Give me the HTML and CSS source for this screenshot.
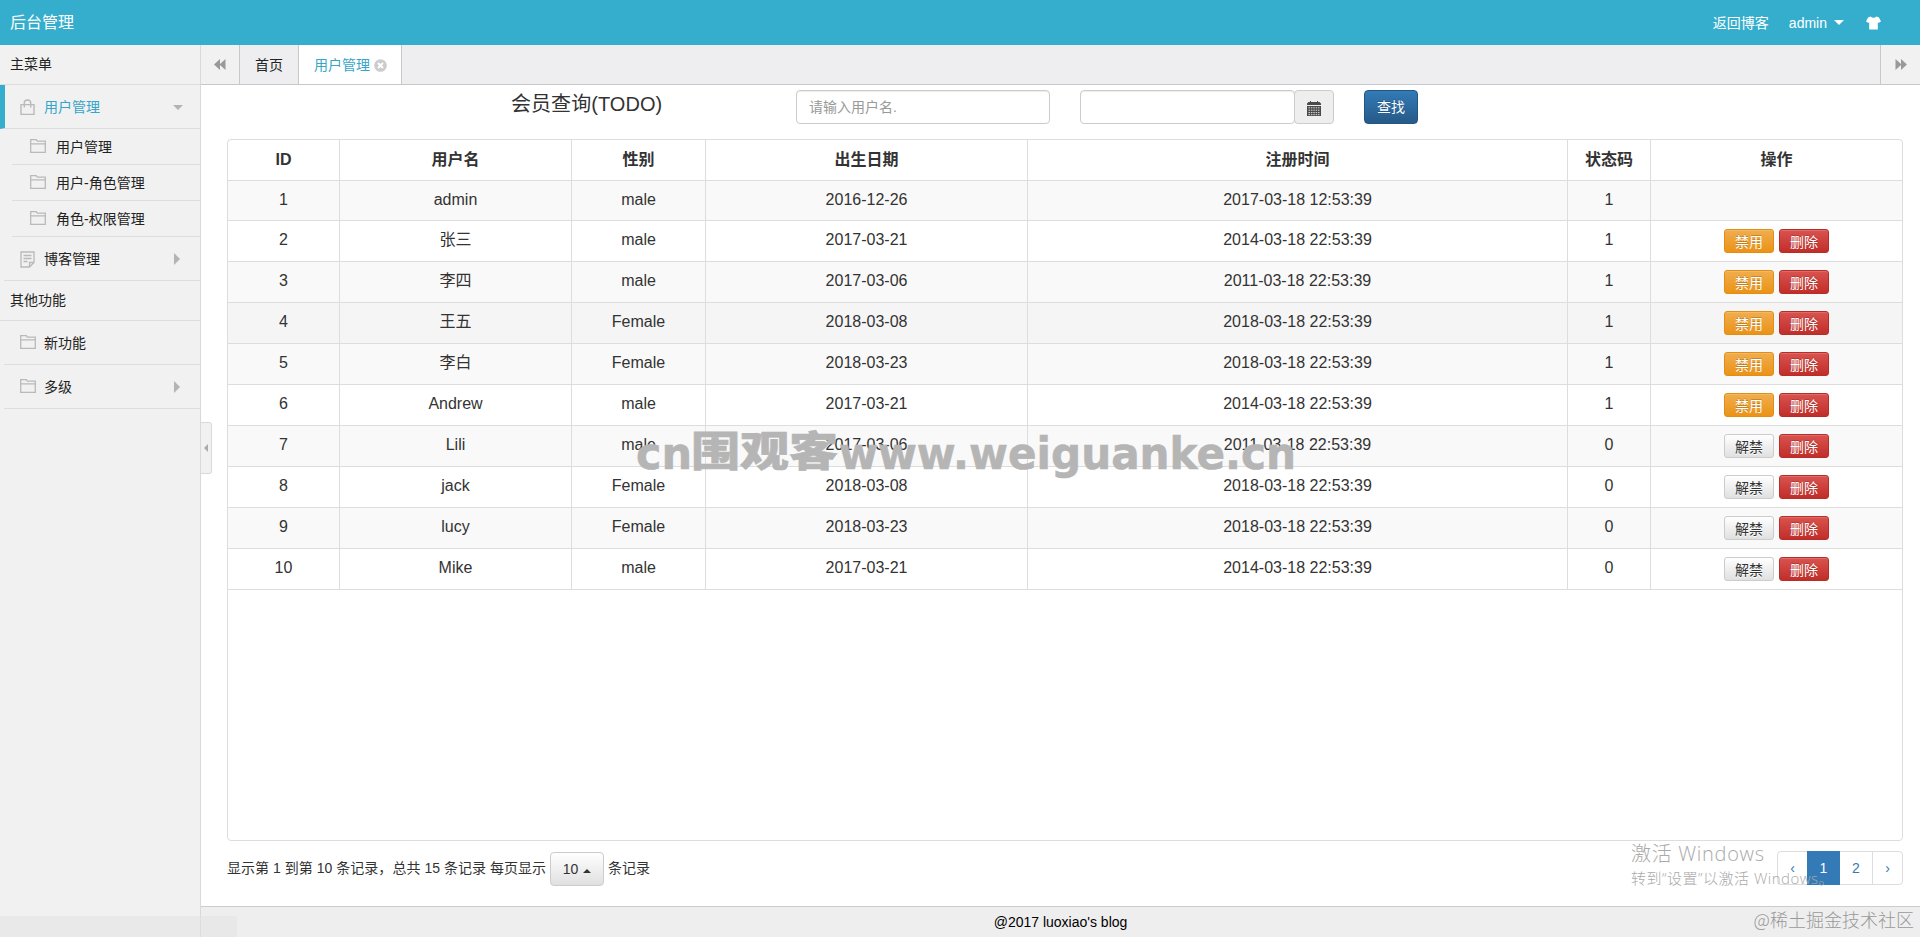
FILE: index.html
```html
<!DOCTYPE html>
<html lang="zh-CN">
<head>
<meta charset="utf-8">
<title>后台管理</title>
<link rel="stylesheet" href="styles.css">
</head>
<body>
<svg class="defs" width="0" height="0">
  <symbol id="folder" viewBox="0 0 16 14"><path d="M.7 13.300V.7h5.600l1 1.500h8v11.100zM.7 4.900h14.600" fill="none" stroke="#b9b9b9" stroke-width="1.300"/></symbol>
  <symbol id="rewind" viewBox="0 0 12 11"><path d="M6 0v4.900L11.500 0v11L6 6.100V11L0 5.500z" fill="#999"/></symbol>
</svg>
<header class="top">
  <div class="brand">后台管理</div>
  <nav class="top-nav">
    <a class="back">返回博客</a>
    <a class="user">admin</a><i class="caret"></i>
    <svg class="shirt" width="15" height="14" viewBox="0 0 15 14"><path d="M4.500 .5Q7.500 3 10.500 .5L13 1.400 15 5.500 12.300 7 11.800 6.300V13.500H3.200V6.300L2.700 7 0 5.500 2 1.400z" fill="#fff"/></svg>
  </nav>
</header>
<div class="body">
  <aside class="side">
    <div class="side-title">主菜单</div>
    <div class="item active"><svg class="ico" width="15" height="17" viewBox="0 0 15 17"><path d="M1 5.600h13v9.800H1zM4.300 8.500V4Q4.300 1 7.500 1T10.700 4v4.500" fill="none" stroke="#b9b9b9" stroke-width="1.400"/></svg><span>用户管理</span><i class="arrow down"></i></div>
    <div class="sub"><svg class="ico" width="16" height="14"><use href="#folder"/></svg><span>用户管理</span></div>
    <div class="sub"><svg class="ico" width="16" height="14"><use href="#folder"/></svg><span>用户-角色管理</span></div>
    <div class="sub"><svg class="ico" width="16" height="14"><use href="#folder"/></svg><span>角色-权限管理</span></div>
    <div class="item"><svg class="ico" width="15" height="17" viewBox="0 0 15 17"><path d="M1 1h13v10.500L9.500 16H1zM14 11.500H9.500V16M3.500 4.500h8M3.500 7.500h8M3.500 10.500h4" fill="none" stroke="#b9b9b9" stroke-width="1.300"/></svg><span>博客管理</span><i class="arrow right"></i></div>
    <div class="side-title second">其他功能</div>
    <div class="item"><svg class="ico f" width="16" height="14"><use href="#folder"/></svg><span>新功能</span></div>
    <div class="item"><svg class="ico f" width="16" height="14"><use href="#folder"/></svg><span>多级</span><i class="arrow right"></i></div>
  </aside>
  <main class="main">
    <div class="tabs">
      <div class="tab-btn"><svg width="12" height="11"><use href="#rewind"/></svg></div>
      <div class="tab home">首页</div>
      <div class="tab current">用户管理<svg width="13" height="13" viewBox="0 0 13 13"><circle cx="6.500" cy="6.500" r="6.300" fill="#ccc"/><path d="M4 4l5 5M9 4l-5 5" stroke="#fff" stroke-width="1.900"/></svg></div>
      <div class="tab-btn last"><svg class="flip" width="12" height="11"><use href="#rewind"/></svg></div>
    </div>
    <section class="content">
      <form class="search">
        <h4>会员查询(TODO)</h4>
        <div class="input name">请输入用户名.</div>
        <div class="input date"></div>
        <div class="addon"><svg width="14" height="15" viewBox="0 0 14 15"><path d="M1.500 1h1.500V0h1v1h6V0h1v1h1.500L14 2.500V4H0V2.500zM0 5h14v10H0z" fill="#4a4a4a"/><path d="M1.500 6.800h11M1.500 9.200h11M1.500 11.600h11M1.500 13.700h11" stroke="#eee" stroke-width=".9" stroke-dasharray="1.500 .9"/></svg></div>
        <div class="find">查找</div>
      </form>
      <div class="grid-box">
        <table class="grid">
          <colgroup><col class="c1"><col class="c2"><col class="c3"><col class="c4"><col class="c5"><col class="c6"><col class="c7"></colgroup>
          <thead><tr><th>ID</th><th>用户名</th><th>性别</th><th>出生日期</th><th>注册时间</th><th>状态码</th><th>操作</th></tr></thead>
          <tbody>
            <tr class="first"><td>1</td><td>admin</td><td>male</td><td>2016-12-26</td><td>2017-03-18 12:53:39</td><td>1</td><td></td></tr>
            <tr><td>2</td><td>张三</td><td>male</td><td>2017-03-21</td><td>2014-03-18 22:53:39</td><td>1</td><td><div class="ops"><b class="btn warn">禁用</b><b class="btn danger">删除</b></div></td></tr>
            <tr><td>3</td><td>李四</td><td>male</td><td>2017-03-06</td><td>2011-03-18 22:53:39</td><td>1</td><td><div class="ops"><b class="btn warn">禁用</b><b class="btn danger">删除</b></div></td></tr>
            <tr class="hover"><td>4</td><td>王五</td><td>Female</td><td>2018-03-08</td><td>2018-03-18 22:53:39</td><td>1</td><td><div class="ops"><b class="btn warn">禁用</b><b class="btn danger">删除</b></div></td></tr>
            <tr><td>5</td><td>李白</td><td>Female</td><td>2018-03-23</td><td>2018-03-18 22:53:39</td><td>1</td><td><div class="ops"><b class="btn warn">禁用</b><b class="btn danger">删除</b></div></td></tr>
            <tr><td>6</td><td>Andrew</td><td>male</td><td>2017-03-21</td><td>2014-03-18 22:53:39</td><td>1</td><td><div class="ops"><b class="btn warn">禁用</b><b class="btn danger">删除</b></div></td></tr>
            <tr><td>7</td><td>Lili</td><td>male</td><td>2017-03-06</td><td>2011-03-18 22:53:39</td><td>0</td><td><div class="ops"><b class="btn plain">解禁</b><b class="btn danger">删除</b></div></td></tr>
            <tr><td>8</td><td>jack</td><td>Female</td><td>2018-03-08</td><td>2018-03-18 22:53:39</td><td>0</td><td><div class="ops"><b class="btn plain">解禁</b><b class="btn danger">删除</b></div></td></tr>
            <tr><td>9</td><td>lucy</td><td>Female</td><td>2018-03-23</td><td>2018-03-18 22:53:39</td><td>0</td><td><div class="ops"><b class="btn plain">解禁</b><b class="btn danger">删除</b></div></td></tr>
            <tr><td>10</td><td>Mike</td><td>male</td><td>2017-03-21</td><td>2014-03-18 22:53:39</td><td>0</td><td><div class="ops"><b class="btn plain">解禁</b><b class="btn danger">删除</b></div></td></tr>
          </tbody>
        </table>
      </div>
      <div class="pager">
        <span class="info">显示第 1 到第 10 条记录，总共 15 条记录 每页显示</span>
        <div class="size">10<i class="caret up"></i></div>
        <span class="info">条记录</span>
        <div class="pages"><a>‹</a><a class="on">1</a><a>2</a><a>›</a></div>
      </div>
    </section>
    <footer class="foot">@2017 luoxiao's blog</footer>
    <div class="handle"><i></i></div>
  </main>
</div>
<div class="status-bubble"></div>
<svg class="mark" width="670" height="60" viewBox="0 0 670 60">
  <text x="5" y="43" font-size="45" textLength="56" lengthAdjust="spacingAndGlyphs">cn</text>
  <text class="cjk" x="60" y="40" font-size="41" textLength="147" lengthAdjust="spacingAndGlyphs">围观客</text>
  <text x="208" y="43" font-size="45" textLength="457" lengthAdjust="spacingAndGlyphs">www.weiguanke.cn</text>
</svg>
<div class="activate"><div class="a1">激活 Windows</div><div class="a2">转到“设置”以激活 Windows。</div></div>
<div class="community">@稀土掘金技术社区</div>
</body>
</html>
```
FILE: styles.css
```css
* { box-sizing: border-box; }
body { margin: 0; width: 1920px; height: 937px; overflow: hidden; position: relative; display: flex; flex-direction: column; background: #fff; color: #333; font: 14px/20px "Liberation Sans", "Noto Sans CJK SC", sans-serif; }
.defs { position: absolute; }
.top { height: 45px; flex: none; background: #35aecd; color: #fff; display: flex; align-items: center; justify-content: space-between; padding: 0 39px 0 10px; }
.brand { font-size: 16px; }
.top-nav { display: flex; align-items: center; }
.back { margin-right: 20px; }
.caret { border: 5px solid transparent; border-top-color: currentColor; border-bottom: 0; margin: 0 22px 0 7px; }
.body { flex: 1; display: flex; min-height: 0; }
.side { width: 201px; background: #f1f1f1; border-right: 1px solid #d9d9d9; flex: none; }
.side-title { height: 40px; border-bottom: 1px solid #ddd; padding: 9px 10px; color: #222; }
.item { height: 44px; margin-left: 4px; padding: 1px 20px 0 16px; border-bottom: 1px solid #ddd; display: flex; align-items: center; color: #222; }
.item .ico { margin-right: 9px; flex: none; }
.item .ico.f { margin-right: 8px; margin-bottom: 2px; }
.side .item.active { margin-left: 0; padding-left: 15px; padding-right: 17px; border-left: 5px solid #35aecd; color: #35a5c8; }
.sub { height: 36px; margin-left: 12px; padding-left: 18px; border-bottom: 1px solid #ddd; display: flex; align-items: center; color: #222; }
.sub .ico { margin-right: 10px; margin-bottom: 2px; }
.arrow { margin-left: auto; border: 5px solid transparent; }
.arrow.down { border-top: 5px solid #b3b3b3; border-bottom: 0; }
.arrow.right { border-left: 6px solid #b3b3b3; border-right: 0; border-top-width: 6px; border-bottom-width: 6px; }
.main { flex: 1; display: flex; flex-direction: column; position: relative; }
.tabs { height: 40px; flex: none; background: #eeeef0; border-bottom: 1px solid #c8c8c8; display: flex; }
.tab-btn { width: 39px; background: #f1f1f1; border-right: 1px solid #c8c8c8; display: flex; align-items: center; justify-content: center; }
.tab-btn.last { margin-left: auto; width: 40px; border-right: 0; border-left: 1px solid #c8c8c8; }
.flip { transform: scaleX(-1); }
.tab { border-right: 1px solid #c8c8c8; display: flex; align-items: center; padding-top: 1px; color: #222; }
.home { width: 59px; padding-left: 15px; }
.current { width: 103px; padding-left: 15px; background: #fff; color: #35a5c8; }
.current svg { margin-left: 4px; }
.content { flex: 1; padding: 5px 17px 0 26px; }
.search { display: flex; height: 49px; align-items: flex-start; margin: 0; }
.search h4 { width: 284px; margin: 2px 0 0 284px; font-size: 20px; line-height: 24px; font-weight: 400; letter-spacing: .05px; }
.input { height: 34px; border: 1px solid #ccc; border-radius: 4px; padding: 6px 12px; color: #999; box-shadow: inset 0 1px 1px rgba(0,0,0,.075); margin-left: 1px; }
.name { width: 254px; }
.date { width: 215px; margin-left: 30px; }
.addon { width: 40px; height: 34px; margin-left: -1px; border: 1px solid #ccc; border-radius: 4px; background: #eee; display: flex; align-items: center; justify-content: center; padding-top: 2px; }
.find { width: 54px; height: 34px; margin-left: 30px; border: 1px solid #245580; border-radius: 4px; background: linear-gradient(#337ab7, #265a88); color: #fff; text-align: center; line-height: 32px; text-shadow: 0 -1px 0 rgba(0,0,0,.2); }
.grid-box { height: 702px; border: 1px solid #ddd; border-radius: 4px; overflow: hidden; }
.grid { width: 1674px; table-layout: fixed; border-collapse: separate; border-spacing: 0; font-size: 16px; line-height: 22px; text-align: center; }
.c1 { width: 112px; }
.c2 { width: 232px; }
.c3 { width: 134px; }
.c4 { width: 322px; }
.c5 { width: 540px; }
.c6 { width: 83px; }
.c7 { width: 251px; }
.grid th, .grid td { height: 41px; padding: 8px 0 0; vertical-align: top; border-right: 1px solid #ddd; border-bottom: 1px solid #ddd; }
.grid th { padding-top: 9px; }
.grid th:last-child, .grid td:last-child { border-right: 0; }
.grid .first td { height: 40px; }
.grid tbody tr:nth-child(odd) { background: #f9f9f9; }
.grid .hover { background: #f5f5f5; }
.ops { display: flex; justify-content: center; gap: 5px; }
.btn { width: 50px; height: 24px; border: 1px solid; border-radius: 3px; font-size: 14px; line-height: 24px; font-weight: 400; color: #fff; text-shadow: 0 -1px 0 rgba(0,0,0,.2); box-shadow: inset 0 1px 0 rgba(255,255,255,.15); }
.warn { background: linear-gradient(#f0ad4e, #eb9316); border-color: #e38d13; }
.danger { background: linear-gradient(#d9534f, #c12e2a); border-color: #b92c28; }
.plain { background: linear-gradient(#fff, #e0e0e0); border-color: #ccc; color: #333; text-shadow: 0 1px 0 #fff; }
.pager { height: 44px; padding-top: 10px; display: flex; align-items: flex-start; }
.info { padding-top: 7px; white-space: nowrap; }
.info:first-child { width: 323px; letter-spacing: .03px; }
.size { width: 54px; height: 34px; margin: 1px 4px 0 0; border: 1px solid #ccc; border-radius: 4px; background: linear-gradient(#fff, #e0e0e0); display: flex; align-items: center; justify-content: center; }
.caret.up { border: 4px solid transparent; border-bottom-color: currentColor; border-top: 0; margin: 3px 0 0 5px; }
.pages { margin-left: auto; display: flex; height: 34px; border: 1px solid #ddd; border-radius: 4px; color: #337ab7; }
.pages a { width: 32px; line-height: 32px; text-align: center; }
.pages a:first-child { width: 29px; }
.pages .on { width: 33px; height: 34px; margin-top: -1px; line-height: 34px; background: #337ab7; color: #fff; }
.pages a:last-child { width: 30px; border-left: 1px solid #ddd; }
.foot { height: 31px; flex: none; background: #eee; border-top: 1px solid #ccc; color: #000; text-align: center; line-height: 31px; }
.handle { position: absolute; left: 0; top: 377px; width: 11px; height: 52px; background: #f1f1f1; border: 1px solid #d9d9d9; border-left: 0; border-radius: 0 3px 3px 0; display: flex; align-items: center; justify-content: center; }
.handle i { border: 4px solid transparent; border-right-color: #aaa; border-left: 0; }
.status-bubble { position: absolute; left: 0; bottom: 0; width: 237px; height: 21px; background: rgba(225,225,225,.5); border-top-right-radius: 3px; }
.mark { position: absolute; left: 631px; top: 426px; fill: #b5b5b5; stroke: #b5b5b5; stroke-width: .6; font-family: "DejaVu Sans", sans-serif; font-weight: 700; }
.mark .cjk { font-family: "Noto Sans CJK SC", sans-serif; font-weight: 900; }
.activate { position: absolute; left: 1631px; top: 841px; color: #aaa; font-family: "Open Sans", "Noto Sans CJK SC", sans-serif; font-weight: 300; white-space: nowrap; }
.a1 { font-size: 20px; line-height: 26px; letter-spacing: .7px; }
.a2 { font-size: 15px; line-height: 22px; letter-spacing: .5px; }
.community { position: absolute; right: 6px; top: 907px; font: 300 18px/24px "Noto Sans CJK SC", sans-serif; color: #999; }
```
